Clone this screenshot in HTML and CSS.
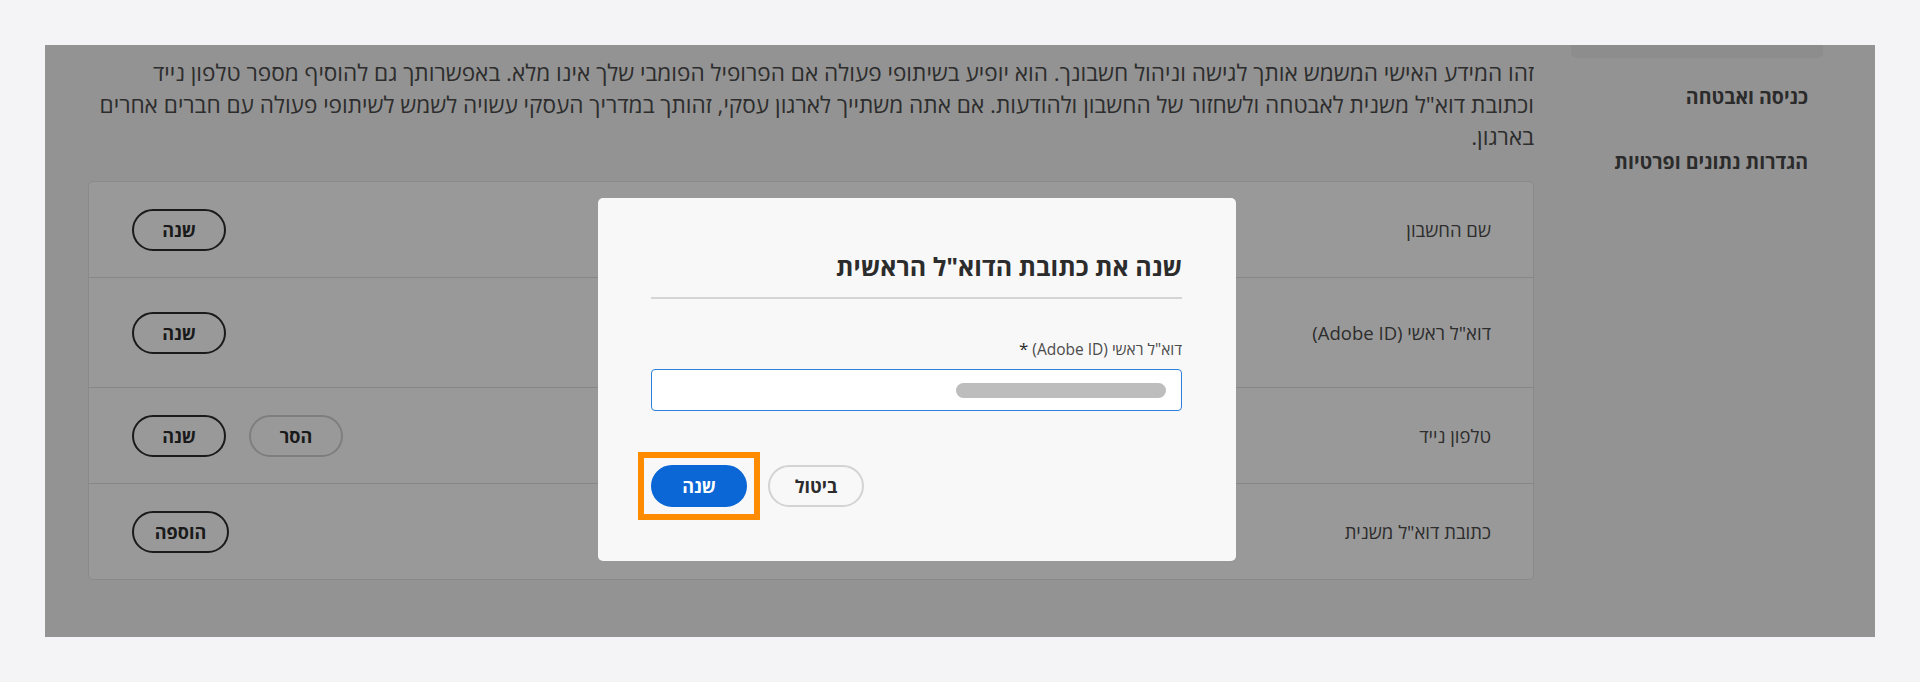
FILE: index.html
```html
<!DOCTYPE html>
<html lang="he" dir="rtl">
<head>
<meta charset="utf-8">
<title>פרופיל חשבון</title>
<link rel="stylesheet" href="styles.css">
</head>
<body>
<div class="frame">
  <aside class="sidebar">
    <div class="nav-selected"></div>
    <nav class="nav">
      <div class="nav-item">כניסה ואבטחה</div>
      <div class="nav-item">הגדרות נתונים ופרטיות</div>
    </nav>
  </aside>
  <main class="main">
    <p class="intro">
      <span class="line">זהו המידע האישי המשמש אותך לגישה וניהול חשבונך. הוא יופיע בשיתופי פעולה אם הפרופיל הפומבי שלך אינו מלא. באפשרותך גם להוסיף מספר טלפון נייד</span>
      <span class="line">וכתובת דוא"ל משנית לאבטחה ולשחזור של החשבון ולהודעות. אם אתה משתייך לארגון עסקי, זהותך במדריך העסקי עשויה לשמש לשיתופי פעולה עם חברים אחרים</span>
      <span class="line">בארגון.</span>
    </p>
    <div class="card">
      <div class="row">
        <span class="label">שם החשבון</span>
        <div class="actions"><button class="btn">שנה</button></div>
      </div>
      <div class="row row-tall">
        <span class="label">דוא"ל ראשי (Adobe ID)</span>
        <div class="actions"><button class="btn">שנה</button></div>
      </div>
      <div class="row">
        <span class="label">טלפון נייד</span>
        <div class="actions"><button class="btn btn-quiet">הסר</button><button class="btn">שנה</button></div>
      </div>
      <div class="row">
        <span class="label">כתובת דוא"ל משנית</span>
        <div class="actions"><button class="btn btn-wide">הוספה</button></div>
      </div>
    </div>
  </main>
  <div class="backdrop"></div>
  <section class="dialog">
    <h2 class="dialog-title">שנה את כתובת הדוא"ל הראשית</h2>
    <div class="dialog-divider"></div>
    <label class="field-label">דוא"ל ראשי (Adobe ID) <span class="req">*</span></label>
    <div class="field-input"><span class="redacted"></span></div>
    <div class="dialog-buttons">
      <button class="dbtn dbtn-primary">שנה<span class="highlight"></span></button>
      <button class="dbtn dbtn-secondary">ביטול</button>
    </div>
  </section>
</div>
</body>
</html>
```

FILE: styles.css
```css
* { box-sizing: border-box; }

html, body {
  margin: 0;
  padding: 0;
}

body {
  background: #f4f3f6;
  font-family: "Open Sans", "Liberation Sans", "DejaVu Sans", sans-serif;
  width: 1920px;
  height: 682px;
  overflow: hidden;
}

.frame {
  position: relative;
  margin: 45px 45px 0 45px;
  width: 1830px;
  height: 592px;
  background: #f5f5f5;
  overflow: hidden;
  display: flex;
  padding: 0 52px 0 43px;
  gap: 37px;
}

/* Sidebar */
.sidebar {
  width: 252px;
  flex: none;
}

.nav-selected {
  height: 13px;
  background: #ebebeb;
  border-radius: 0 0 5px 5px;
}

.nav {
  display: flex;
  flex-direction: column;
  gap: 43px;
  padding-top: 28px;
}

.nav-item {
  padding-right: 15px;
  font-size: 19.5px;
  line-height: 22px;
  font-weight: 700;
  color: #484848;
}

/* Main */
.main {
  flex: 1;
  min-width: 0;
}

.intro {
  margin: 12px 0 0 0;
  font-size: 22.6px;
  line-height: 32px;
  color: #4b4b4b;
}

.intro .line {
  display: block;
  white-space: nowrap;
}

.card {
  margin-top: 28px;
  background: #ffffff;
  border: 1px solid #e6e6e6;
  border-radius: 5px;
}

.row {
  display: flex;
  align-items: center;
  justify-content: space-between;
  height: 96px;
  padding: 0 42px 0 43px;
  border-top: 1px solid #e1e1e1;
}

.row:first-child {
  border-top: none;
  height: 95px;
}

.row-tall {
  height: 110px;
}

.label {
  font-size: 18.5px;
  color: #4b4b4b;
}

.actions {
  display: flex;
  gap: 23px;
}

.btn {
  font-family: inherit;
  height: 42px;
  width: 94px;
  border: 2px solid #2c2c2c;
  border-radius: 21px;
  background: transparent;
  color: #2c2c2c;
  font-size: 18px;
  font-weight: 700;
  padding: 0;
}

.btn-quiet {
  border-color: #d3d3d3;
}

.btn-wide {
  width: 97px;
}

/* Modal */
.backdrop {
  position: absolute;
  inset: 0;
  background: rgba(0, 0, 0, 0.4);
}

.dialog {
  position: absolute;
  left: 553px;
  top: 153px;
  width: 638px;
  background: #f8f8f8;
  border-radius: 5px;
  padding: 52px 54px 54px 53px;
}

.dialog-title {
  margin: 0;
  font-size: 25px;
  line-height: 32px;
  font-weight: 700;
  color: #2c2c2c;
}

.dialog-divider {
  margin-top: 15px;
  height: 2px;
  background: #d5d5d5;
}

.field-label {
  display: block;
  margin-top: 40px;
  font-size: 15.5px;
  line-height: 20px;
  color: #4b4b4b;
}

.req {
  font-size: 17px;
  color: #2c2c2c;
}

.field-input {
  margin-top: 10px;
  height: 42px;
  border: 1px solid #2f80dc;
  border-radius: 4px;
  background: #ffffff;
  display: flex;
  align-items: center;
  padding-right: 15px;
}

.redacted {
  width: 210px;
  height: 15px;
  border-radius: 8px;
  background: #bdbdbd;
}

.dialog-buttons {
  margin-top: 54px;
  display: flex;
  flex-direction: row-reverse;
  justify-content: flex-start;
  gap: 21px;
}

.dbtn {
  position: relative;
  font-family: inherit;
  height: 42px;
  width: 96px;
  border-radius: 21px;
  font-size: 18px;
  font-weight: 700;
  padding: 0;
}

.dbtn-primary {
  background: #0b66d6;
  border: 2px solid #0b66d6;
  color: #ffffff;
}

.dbtn-secondary {
  background: #f8f8f8;
  border: 2px solid #d3d3d3;
  color: #2c2c2c;
}

.highlight {
  position: absolute;
  inset: -15px;
  border: 6px solid #ff8c00;
}
```
